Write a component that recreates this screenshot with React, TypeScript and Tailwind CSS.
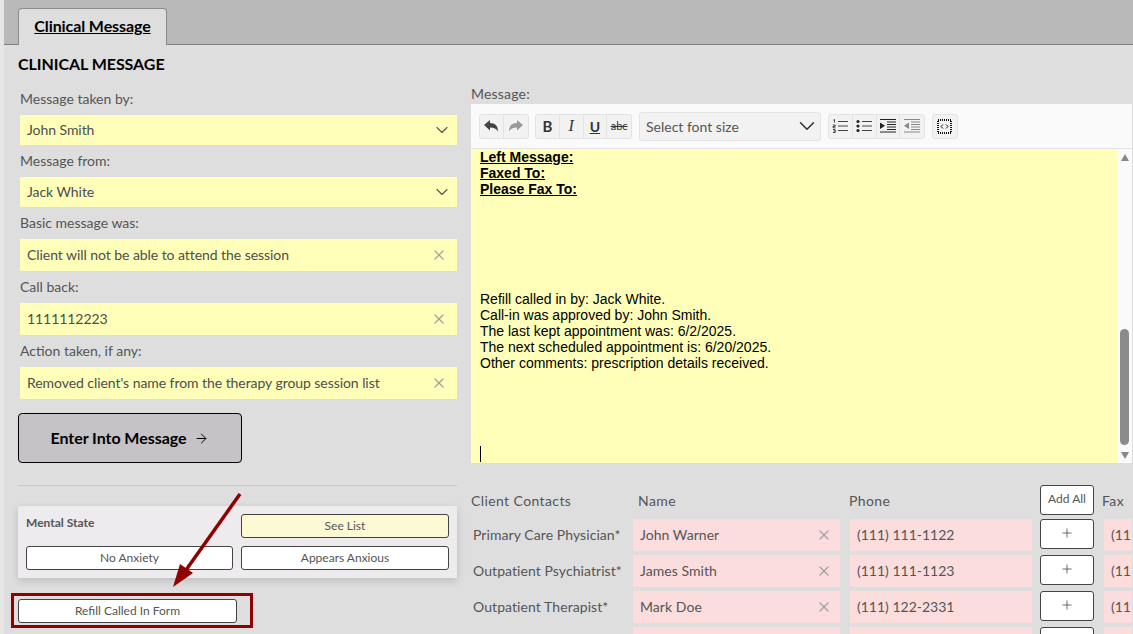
import { ChevronDown, X, ArrowRight, Plus } from 'lucide-react';

const lato = { fontFamily: 'Lato, sans-serif' };

function Field({ label, value, kind, tall }: { label: string; value: string; kind: 'select' | 'clear'; tall?: boolean }) {
  return (
    <div>
      <div className="h-[24px] pl-[2px] text-[14px] leading-[16px] text-[#555]">{label}</div>
      <div className={`ml-[2px] flex items-center justify-between bg-[#ffffb9] pl-[7px] text-[14px] tracking-[-0.06px] text-[#4d4d4d] ${tall ? 'h-[32px] pr-[10px]' : 'h-[30px] pr-[5px]'}`}>
        <span className="mb-[2px]">{value}</span>
        {kind === 'select' ? (
          <ChevronDown className="w-[20px] h-[20px] text-[#555]" strokeWidth={1.3} />
        ) : (
          <X className="w-[16px] h-[16px] text-[#a0a0a0]" strokeWidth={1.8} />
        )}
      </div>
    </div>
  );
}

function ToolGroup({ children }: { children: React.ReactNode }) {
  return <div className="flex h-[25px] rounded-[3px] border border-[#e3e3e3] bg-[#f2f2f2] divide-x divide-[#e3e3e3]">{children}</div>;
}

function Tool({ children }: { children: React.ReactNode }) {
  return <div className="flex w-[23.75px] items-center justify-center text-[#333]">{children}</div>;
}

function Reply({ color, flip }: { color: string; flip?: boolean }) {
  return (
    <svg width="14" height="12" viewBox="0 0 14 12" className={flip ? '-scale-x-100' : ''}>
      <path d="M0 5L6 0v3.1c5 0 8 2.7 8 8.4C12.600 8.800 10 7.400 6 7.400V10.500z" fill={color} />
    </svg>
  );
}

function Lines({ marker, dim }: { marker: 'num' | 'dot' | 'in' | 'out'; dim?: boolean }) {
  const color = dim ? '#888' : '#222';
  return (
    <svg width="16" height="14" viewBox="0 0 16 14" fill="none" stroke={color}>
      {marker === 'num' || marker === 'dot' ? (
        <>
          <path d="M6 2.500h10M6 7h10M6 11.500h10" stroke="#444" />
          {marker === 'dot' ? (
            <g fill={color} stroke="none">
              <circle cx="2" cy="2.500" r="1.600" />
              <circle cx="2" cy="7" r="1.600" />
              <circle cx="2" cy="11.500" r="1.600" />
            </g>
          ) : (
            <path d="M1.500 1l1-.5v3M.8 6h2.400v1.400H1v1.400h2.400M1 10.500h2.200v3H1M1.500 12h1.700" strokeWidth="0.8" />
          )}
        </>
      ) : (
        <>
          <path d="M0 .5h16M7 3h9M7 5.500h9M7 8h9M7 10.500h9M0 13h16" />
          {marker === 'in' ? <path d="M0 3.500l5 3.200-5 3.200z" fill={color} stroke="none" /> : <path d="M5 3.500L0 6.700l5 3.200z" fill={color} stroke="none" />}
        </>
      )}
    </svg>
  );
}

function ContactRow({ label, name, phone, clear = true }: { label: string; name: string; phone: string; clear?: boolean }) {
  return (
    <div className="flex h-[32px] shrink-0 items-stretch whitespace-nowrap text-[14px] text-[#555]">
      <div className="flex w-[162px] shrink-0 items-center pb-[2px] pl-[2px] tracking-[0.07px]">{label}</div>
      <div className="flex w-[207px] shrink-0 items-center justify-between bg-[#fbdddd] pl-[7px] pr-[8px] tracking-[0.05px]">
        <span className="mb-[2px]">{name}</span>
        {clear && <X className="w-[16px] h-[16px] text-[#a0a0a0]" strokeWidth={1.8} />}
      </div>
      <div className="ml-[10px] flex w-[182px] shrink-0 items-center bg-[#fbdddd] pb-[2px] pl-[7px]">{phone}</div>
      <div className="ml-[8px] flex h-[30px] w-[54px] shrink-0 items-center justify-center rounded-[3px] border border-[#444] bg-white pb-[2px]">
        <Plus className="w-[14px] h-[14px]" strokeWidth={1.5} />
      </div>
      <div className="ml-[10px] flex w-[60px] shrink-0 items-center overflow-hidden bg-[#fbdddd] pb-[2px] pl-[7px]">{phone}</div>
    </div>
  );
}

export default function App() {
  return (
    <div className="relative h-[634px] w-[1133px] overflow-hidden" style={lato}>
      <div className="h-full border-l-[4px] border-[#e6e6e6] bg-[#dedede]">
        {/* Tab strip */}
        <div className="flex h-[45px] items-end border-b border-[#7f7f7f] bg-[#b9b9b9] pl-[14px]">
          <div className="-mb-px flex h-[37px] w-[149px] items-center justify-center rounded-t-[4px] border border-b-0 border-[#8c8c8c] bg-[#dedede] pb-[2px] text-[16px] font-bold tracking-[-0.1px] text-black underline">
            Clinical Message
          </div>
        </div>

        <div className="flex">
          {/* Left column */}
          <div className="w-[453px] shrink-0 pl-[14px]">
            <h1 className="pt-[8px] text-[16px] font-bold leading-[22px] tracking-[-0.05px] text-black">CLINICAL MESSAGE</h1>
            <div className="mt-[16px] w-[439px]">
              <Field label="Message taken by:" value="John Smith" kind="select" />
              <div className="mt-[8px]"><Field label="Message from:" value="Jack White" kind="select" /></div>
              <div className="mt-[8px]"><Field label="Basic message was:" value="Client will not be able to attend the session" kind="clear" tall /></div>
              <div className="mt-[8px]"><Field label="Call back:" value="1111112223" kind="clear" tall /></div>
              <div className="mt-[8px]"><Field label="Action taken, if any:" value="Removed client's name from the therapy group session list" kind="clear" tall /></div>
            </div>
            <div className="mt-[14px] flex h-[50px] w-[224px] items-center justify-center gap-[8px] rounded-[4px] border border-black bg-[#c5c3c6] text-[16px] font-bold tracking-[-0.05px] text-black">
              Enter Into Message
              <ArrowRight className="w-[15px] h-[15px]" strokeWidth={1.6} />
            </div>
            <div className="mt-[22px] h-px w-[439px] bg-[#c8c8c8]" />
            <div className="mt-[20px] grid h-[72px] w-[439px] grid-cols-[207px_208px] content-start gap-x-[8px] gap-y-[8px] bg-[#edebee] px-[8px] pt-[8px] text-[12px] text-[#555] shadow-[0_3px_8px_rgba(0,0,0,0.15)]">
              <div className="font-bold leading-[18px]">Mental State</div>
              <div className="flex h-[24px] items-center justify-center rounded-[3px] border border-[#444] bg-[#fdf9d5]">See List</div>
              <div className="flex h-[24px] items-center justify-center rounded-[3px] border border-[#444] bg-white">No Anxiety</div>
              <div className="flex h-[24px] items-center justify-center rounded-[3px] border border-[#444] bg-white">Appears Anxious</div>
            </div>
            <div className="mt-[21px] flex h-[24px] w-[219px] items-center justify-center rounded-[3px] border border-[#444] bg-white text-[12px] text-[#555]">
              Refill Called In Form
            </div>
          </div>

          {/* Right column */}
          <div className="ml-[14px] w-[661px] shrink-0 overflow-hidden pt-[39px]">
            <div className="h-[20px] text-[14px] leading-[20px] tracking-[0.2px] text-[#555]">Message:</div>
            <div className="flex h-[45px] items-center border-b border-[#e5e5e5] bg-[#fafafa] pl-[8px]">
              <ToolGroup>
                <Tool><Reply color="#444" /></Tool>
                <Tool><Reply color="#999" flip /></Tool>
              </ToolGroup>
              <div className="ml-[6.5px]">
                <ToolGroup>
                  <Tool><span className="text-[15px] font-bold">B</span></Tool>
                  <Tool><span className="text-[16px] italic" style={{ fontFamily: 'Liberation Serif, serif' }}>I</span></Tool>
                  <Tool><span className="text-[14px] font-bold underline">U</span></Tool>
                  <Tool><span className="text-[11px] line-through">abc</span></Tool>
                </ToolGroup>
              </div>
              <div className="ml-[7px] flex h-[29px] w-[182px] items-center justify-between rounded-[3px] border border-[#e3e3e3] bg-[#f2f2f2] pl-[6px] text-[14px] text-[#555]">
                Select font size
                <ChevronDown className="w-[26px] h-[26px] text-[#333]" strokeWidth={1.4} />
              </div>
              <div className="ml-[7px]">
                <ToolGroup>
                  <Tool><Lines marker="num" /></Tool>
                  <Tool><Lines marker="dot" /></Tool>
                  <Tool><Lines marker="in" /></Tool>
                  <Tool><Lines marker="out" dim /></Tool>
                </ToolGroup>
              </div>
              <div className="ml-[7px]">
                <ToolGroup>
                  <Tool>
                    <svg width="15" height="15" viewBox="0 0 15 15" fill="none" stroke="#111">
                      <rect x="1" y="1" width="13" height="13" strokeDasharray="1 1" strokeWidth="2" />
                      <path d="M6 5.500L4 7.500l2 2M9 5.500l2 2-2 2" strokeWidth="1" />
                    </svg>
                  </Tool>
                </ToolGroup>
              </div>
            </div>
            <div className="flex h-[314px]">
              <div className="flex-1 bg-[#ffffb9] pl-[9px] text-[14px] leading-[16px] text-black" style={{ fontFamily: 'Liberation Sans, sans-serif' }}>
                <div className="font-bold underline">Left Message:</div>
                <div className="font-bold underline">Faxed To:</div>
                <div className="font-bold underline">Please Fax To:</div>
                <div className="mt-[94px]">Refill called in by: Jack White.</div>
                <div>Call-in was approved by: John Smith.</div>
                <div>The last kept appointment was: 6/2/2025.</div>
                <div>The next scheduled appointment is: 6/20/2025.</div>
                <div>Other comments: prescription details received.</div>
                <div className="mt-[75px] h-[16px] w-px bg-black" />
              </div>
              <div className="flex w-[15px] flex-col items-center bg-[#fafafa] pt-[5px]">
                <div className="h-0 w-0 border-x-[4.5px] border-b-[7px] border-x-transparent border-b-[#888]" />
                <div className="mt-[168px] h-[116px] w-[9px] rounded-full bg-[#8b8b8b]" />
                <div className="mt-[7px] h-0 w-0 border-x-[4.5px] border-t-[7px] border-x-transparent border-t-[#888]" />
              </div>
            </div>

            {/* Client contacts */}
            <div className="mt-[21px] flex h-[34px] items-center whitespace-nowrap text-[14px] tracking-[0.4px] text-[#555]">
              <div className="w-[167px] shrink-0 pb-[2px]">Client Contacts</div>
              <div className="w-[211px] shrink-0 pb-[2px]">Name</div>
              <div className="w-[191px] shrink-0 pb-[2px]">Phone</div>
              <div className="mb-[3px] flex h-[30px] w-[54px] shrink-0 items-center justify-center rounded-[3px] border border-[#444] bg-white pb-[1px] text-[12px] tracking-normal">Add All</div>
              <div className="ml-[8px] shrink-0 pb-[2px]">Fax</div>
            </div>
            <div className="flex flex-col gap-[4px] pt-[1px]">
              <ContactRow label="Primary Care Physician*" name="John Warner" phone="(111) 111-1122" />
              <ContactRow label="Outpatient Psychiatrist*" name="James Smith" phone="(111) 111-1123" />
              <ContactRow label="Outpatient Therapist*" name="Mark Doe" phone="(111) 122-2331" />
              <ContactRow label="" name="" phone="" clear={false} />
            </div>
          </div>
        </div>
      </div>

      {/* Annotation over the page */}
      <div className="absolute left-[11px] top-[593px] h-[35px] w-[242px] border-[3px] border-[#8f0000]" />
      <svg className="absolute left-0 top-0" width="1133" height="634" fill="none">
        <path d="M240 494L186 570" stroke="#8f0000" strokeWidth="3.500" />
        <path d="M173 587L180 564L193 573Z" fill="#8f0000" />
      </svg>
    </div>
  );
}
